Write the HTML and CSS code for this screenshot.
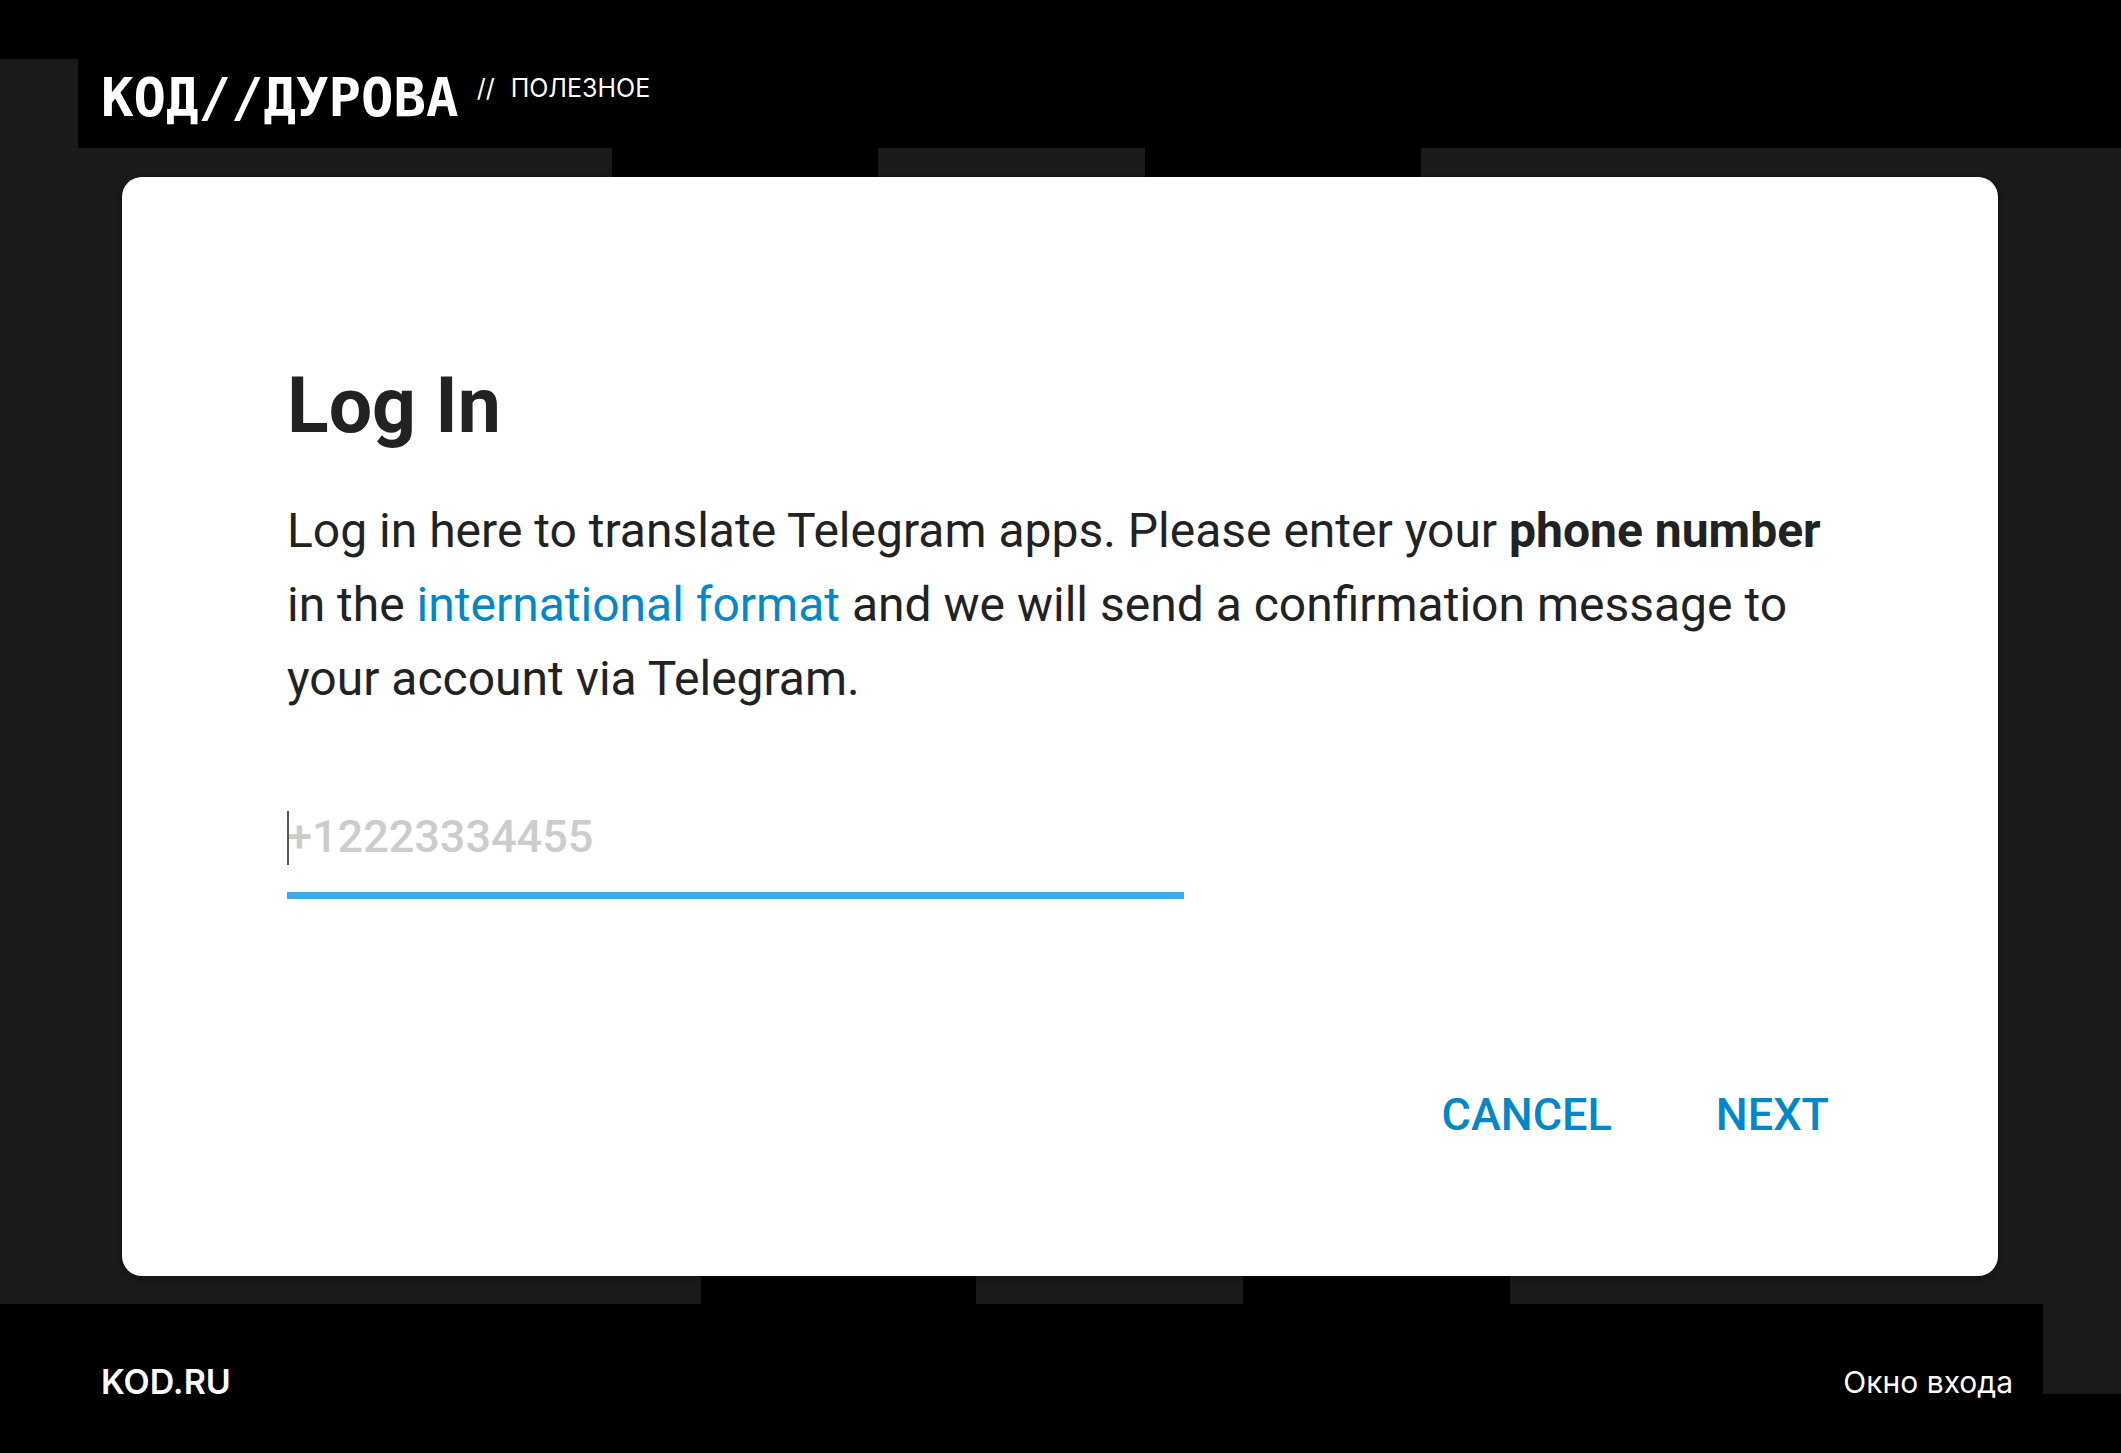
FILE: index.html
```html
<!DOCTYPE html>
<html lang="ru">
<head>
  <meta charset="UTF-8" />
  <meta name="viewport" content="width=device-width, initial-scale=1.0" />
  <title>Окно входа</title>
  <link rel="stylesheet" href="styles.css">
</head>
<body>
  <header class="page-header">
    <div class="wordmark">КОД//ДУРОВА</div>
    <div class="section-name"><span>//</span><span>ПОЛЕЗНОЕ</span></div>
  </header>

  <main class="stage">
    <div class="notches notches-top"><i></i><i></i><i></i><i></i><i></i></div>

    <form class="login-card" lang="en">
      <h1>Log In</h1>
      <p>Log in here to translate Telegram apps. Please enter your <label for="phone">phone number</label> in the <a href="#">international format</a> and we will send a confirmation message to your account via Telegram.</p>
      <div class="field">
        <input type="tel" id="phone" placeholder="+12223334455" />
      </div>
      <div class="actions">
        <button type="reset">CANCEL</button>
        <button type="submit">NEXT</button>
      </div>
    </form>

    <div class="notches notches-bottom"><i></i><i></i><i></i><i></i><i></i></div>
  </main>

  <footer class="page-footer">
    <a href="#">KOD.RU</a>
    <span class="caption">Окно входа</span>
  </footer>
</body>
</html>
```

FILE: styles.css
```css
* {
  box-sizing: border-box;
}
body {
  margin: 0;
  min-height: 100vh;
  display: flex;
  flex-direction: column;
  background: #000;
  color: #fff;
  font-family: Inter, sans-serif;
}
.page-header {
  display: flex;
  align-items: flex-start;
  gap: 18px;
  padding: 71px 101px 23px;
  background: linear-gradient(#1a1a1a, #1a1a1a) 0 59px / 78px 100% no-repeat;
}
.wordmark {
  font: bold 54px/54px "DejaVu Sans Mono", monospace;
}
.section-name {
  display: flex;
  gap: 16px;
  font-size: 25px;
  line-height: 34px;
}

/* grey band behind the card, with black notches along both edges */
.stage {
  background: #1a1a1a;
}
.notches {
  display: flex;
}
.notches i {
  height: 29px;
}
.notches-bottom i {
  height: 28px;
}
.notches i:nth-child(even) {
  background: #000;
}
.notches-top i:nth-child(1) { flex: 612; }
.notches-top i:nth-child(2) { flex: 266; }
.notches-top i:nth-child(3) { flex: 267; }
.notches-top i:nth-child(4) { flex: 276; }
.notches-top i:nth-child(5) { flex: 700; }
.notches-bottom i:nth-child(1) { flex: 701; }
.notches-bottom i:nth-child(2) { flex: 275; }
.notches-bottom i:nth-child(3) { flex: 267; }
.notches-bottom i:nth-child(4) { flex: 267; }
.notches-bottom i:nth-child(5) { flex: 611; }

.login-card {
  margin: 0 123px 0 122px;
  padding: 183px 165px 134px;
  border-radius: 20px;
  background: #fff;
  color: #222;
  font-family: Roboto, sans-serif;
  box-shadow: 0 2px 6px rgba(0, 0, 0, 0.4);
}
.login-card h1 {
  margin: 0 0 42px;
  font-size: 77px;
  line-height: 92px;
  font-weight: 700;
}
.login-card p {
  margin: 0;
  font-size: 48px;
  line-height: 74px;
}
.login-card label {
  font-weight: 700;
}
.login-card p a {
  color: #0088cc;
  text-decoration: none;
}
.field {
  position: relative;
  width: 58%;
  margin-top: 93px;
}
/* text cursor */
.field::before {
  content: "";
  position: absolute;
  left: 0;
  top: 2px;
  width: 2px;
  height: 54px;
  background: #555;
}
.field input {
  display: block;
  width: 100%;
  height: 90px;
  padding: 0 0 29px;
  border: none;
  border-bottom: 7px solid #3aade8;
  background: none;
  color: #222;
  font: 500 45px/54px Roboto, sans-serif;
  outline: none;
}
.field input::placeholder {
  color: #ccc;
  opacity: 1;
}
.actions {
  display: flex;
  justify-content: flex-end;
  gap: 104px;
  margin-top: 189px;
  padding-right: 4px;
}
.actions button {
  padding: 0;
  border: none;
  background: none;
  color: #0088cc;
  font: 500 45px/54px Roboto, sans-serif;
  cursor: pointer;
}

.page-footer {
  flex: 1;
  display: flex;
  justify-content: space-between;
  align-items: flex-start;
  padding: 58px 108px 48px 101px;
  background: linear-gradient(#1a1a1a, #1a1a1a) 100% 0 / 78px 90px no-repeat;
  line-height: 40px;
}
.page-footer a {
  color: #fff;
  font-size: 34px;
  font-weight: 600;
  text-decoration: none;
}
.caption {
  font-size: 30px;
}
```
